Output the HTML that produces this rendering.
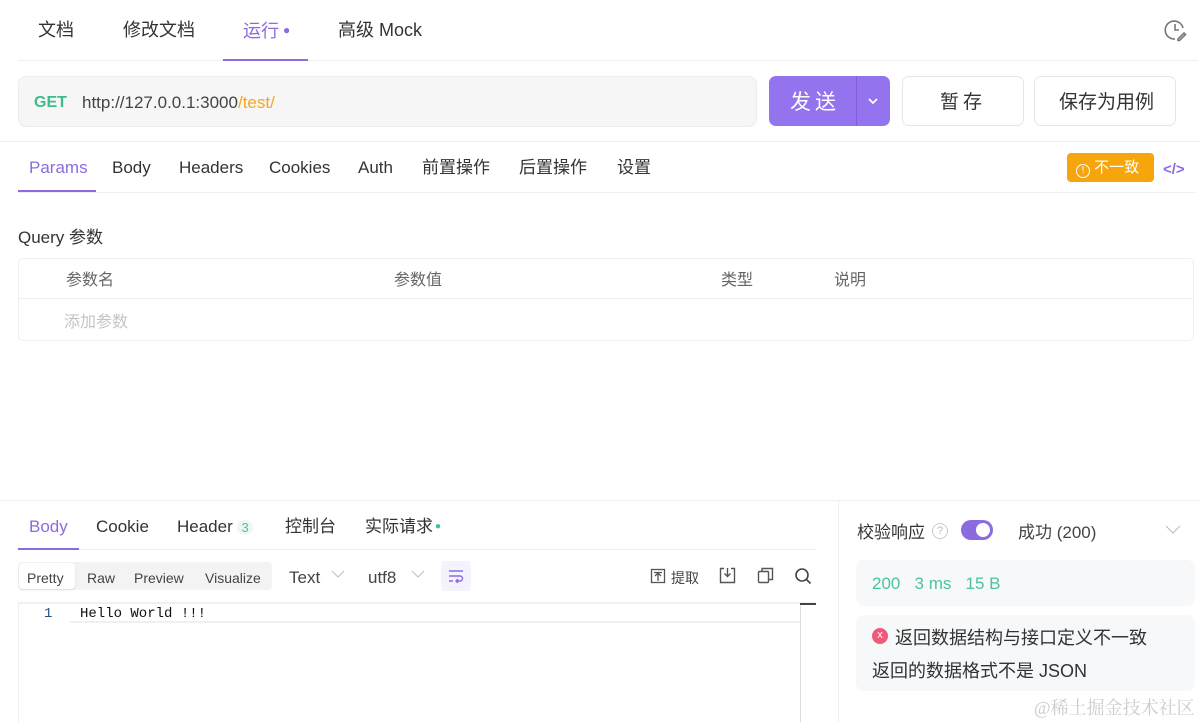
<!DOCTYPE html>
<html><head><meta charset="utf-8">
<style>
*{margin:0;padding:0;box-sizing:border-box}
body{width:1200px;height:722px;position:relative;background:#fff;font-family:"Liberation Sans","Noto Sans CJK SC",sans-serif;color:#333;overflow:hidden}
.a{position:absolute;white-space:nowrap;line-height:24px}
.t{margin-top:2px}
.p{color:#8c6be0}
.line{position:absolute;background:#eee;height:1px}
</style></head><body>
<!-- top tabs -->
<div class="a t" style="left:38px;top:16px;font-size:18px">文档</div>
<div class="a t" style="left:123px;top:16px;font-size:18px">修改文档</div>
<div class="a p t" style="left:243px;top:16px;font-size:18px">运行<span style="font-size:12px;vertical-align:3px;margin-left:4px">●</span></div>
<div class="a t" style="left:338px;top:16px;font-size:18px">高级 Mock</div>
<div class="line" style="left:18px;top:60px;width:1180px"></div>
<div class="a" style="left:223px;top:59px;width:85px;height:2px;background:#8c6be0"></div>
<svg class="a" style="left:1163px;top:18px" width="24" height="24" viewBox="0 0 24 24" fill="none" stroke="#777" stroke-width="1.6"><path d="M20 10A9 9 0 1 0 12 21"/><path d="M12 6v6h4"/><path d="M15 21l6-6 1.5 1.5-6 6H15z"/></svg>
<!-- URL -->
<div class="a" style="left:18px;top:76px;width:739px;height:51px;background:#f6f6f6;border:1px solid #ececec;border-radius:8px"></div>
<div class="a t" style="left:34px;top:89px;font-size:16px;font-weight:bold;color:#3dbd8b">GET</div>
<div class="a t" style="left:82px;top:89px;font-size:17px;color:#444">http://127.0.0.1:3000<span style="color:#f5a623">/test/</span></div>
<div class="a" style="left:769px;top:76px;width:121px;height:50px;background:#9373ee;border-radius:7px"></div>
<div class="a" style="left:856px;top:76px;width:1px;height:50px;background:#835fe0"></div>
<div class="a t" style="left:790px;top:89px;font-size:21px;color:#fff;letter-spacing:4px">发送</div>
<svg class="a" style="left:867px;top:96px" width="12" height="10" viewBox="0 0 12 10"><path d="M2 3l4 4 4-4" stroke="#fff" stroke-width="1.8" fill="none"/></svg>
<div class="a" style="left:902px;top:76px;width:122px;height:50px;border:1px solid #e6e6e6;border-radius:7px"></div>
<div class="a t" style="left:940px;top:89px;font-size:19px;letter-spacing:4px">暂存</div>
<div class="a" style="left:1034px;top:76px;width:142px;height:50px;border:1px solid #e6e6e6;border-radius:7px"></div>
<div class="a t" style="left:1059px;top:89px;font-size:19px">保存为用例</div>
<div class="line" style="left:0;top:141px;width:1200px"></div>
<!-- params tabs -->
<div class="a t" style="left:29px;top:154px;font-size:17px;color:#8c6be0">Params</div>
<div class="a t" style="left:112px;top:154px;font-size:17px">Body</div>
<div class="a t" style="left:179px;top:154px;font-size:17px">Headers</div>
<div class="a t" style="left:269px;top:154px;font-size:17px">Cookies</div>
<div class="a t" style="left:358px;top:154px;font-size:17px">Auth</div>
<div class="a t" style="left:422px;top:154px;font-size:17px">前置操作</div>
<div class="a t" style="left:519px;top:154px;font-size:17px">后置操作</div>
<div class="a t" style="left:617px;top:154px;font-size:17px">设置</div>
<div class="line" style="left:18px;top:192px;width:1177px"></div>
<div class="a" style="left:18px;top:190px;width:78px;height:2px;background:#8c6be0"></div>
<div class="a" style="left:1067px;top:153px;width:87px;height:29px;background:#f7a50c;border-radius:4px;color:#fff;font-size:15px;line-height:29px;padding-left:9px"><span style="display:inline-block;width:14px;height:14px;border:1.5px solid #fff;border-radius:50%;font-size:10px;line-height:11px;text-align:center;vertical-align:-1px">!</span> 不一致</div>
<div class="a t" style="left:1163px;top:156px;font-size:15px;color:#8c6be0;font-weight:bold">&lt;/&gt;</div>
<!-- query -->
<div class="a t" style="left:18px;top:224px;font-size:17px">Query 参数</div>
<div class="a" style="left:18px;top:258px;width:1176px;height:83px;border:1px solid #eee;border-radius:5px"></div>
<div class="line" style="left:18px;top:298px;width:1176px"></div>
<div class="a t" style="left:66px;top:267px;font-size:16px;color:#666">参数名</div>
<div class="a t" style="left:394px;top:267px;font-size:16px;color:#666">参数值</div>
<div class="a t" style="left:721px;top:267px;font-size:16px;color:#666">类型</div>
<div class="a t" style="left:834px;top:267px;font-size:16px;color:#666">说明</div>
<div class="a t" style="left:64px;top:309px;font-size:16px;color:#c4c4c4">添加参数</div>
<!-- bottom -->
<div class="line" style="left:0;top:500px;width:1200px"></div>
<div class="a" style="left:838px;top:500px;width:1px;height:222px;background:#eee"></div>
<div class="a t" style="left:29px;top:513px;font-size:17px;color:#8c6be0">Body</div>
<div class="a t" style="left:96px;top:513px;font-size:17px">Cookie</div>
<div class="a t" style="left:177px;top:513px;font-size:17px">Header <span style="font-size:13px;color:#4cc39a;background:#f3f5f5;border-radius:8px;padding:0 4px">3</span></div>
<div class="a t" style="left:285px;top:513px;font-size:17px">控制台</div>
<div class="a t" style="left:365px;top:513px;font-size:17px">实际请求<span style="color:#3dc48f;font-size:10px;vertical-align:3px;margin-left:2px">●</span></div>
<div class="line" style="left:18px;top:549px;width:798px"></div>
<div class="a" style="left:18px;top:548px;width:61px;height:2px;background:#8c6be0"></div>
<div class="a" style="left:18px;top:562px;width:254px;height:28px;background:#f3f3f3;border-radius:4px"></div>
<div class="a" style="left:19px;top:563px;width:56px;height:26px;background:#fff;border-radius:4px;box-shadow:0 1px 2px rgba(0,0,0,.1)"></div>
<div class="a t" style="left:27px;top:564px;font-size:14px;color:#444">Pretty</div>
<div class="a t" style="left:87px;top:564px;font-size:14px;color:#444">Raw</div>
<div class="a t" style="left:134px;top:564px;font-size:14px;color:#444">Preview</div>
<div class="a t" style="left:205px;top:564px;font-size:14px;color:#444">Visualize</div>
<div class="a t" style="left:289px;top:564px;font-size:17px;color:#444">Text</div>
<svg class="a" style="left:331px;top:569px" width="14" height="10"><path d="M1 2l6 6 6-6" stroke="#bbb" fill="none"/></svg>
<div class="a t" style="left:368px;top:564px;font-size:17px;color:#444">utf8</div>
<svg class="a" style="left:411px;top:569px" width="14" height="10"><path d="M1 2l6 6 6-6" stroke="#bbb" fill="none"/></svg>
<div class="a" style="left:441px;top:561px;width:30px;height:30px;background:#f4f2fc;border-radius:4px"></div>
<svg class="a" style="left:448px;top:568px" width="16" height="16" viewBox="0 0 16 16" fill="none" stroke="#8c6be0" stroke-width="1.4"><path d="M1 3h14M1 8h11a2.5 2.5 0 0 1 0 5H8M10 11l-2 2 2 2M1 13h4"/></svg>
<svg class="a" style="left:650px;top:568px" width="16" height="16" viewBox="0 0 16 16" fill="none" stroke="#555" stroke-width="1.3"><rect x="1.5" y="1.5" width="13" height="13"/><path d="M4 4.5h8M8 5v8M5 8l3-3 3 3"/></svg>
<div class="a t" style="left:671px;top:564px;font-size:14px;color:#444">提取</div>
<svg class="a" style="left:719px;top:567px" width="17" height="17" viewBox="0 0 17 17" fill="none" stroke="#555" stroke-width="1.4"><path d="M5 1.5H1.5v14h14v-14H12M8.5 1v8M5.5 6.5l3 3 3-3"/></svg>
<svg class="a" style="left:757px;top:567px" width="17" height="17" viewBox="0 0 17 17" fill="none" stroke="#555" stroke-width="1.4"><rect x="1.5" y="4.5" width="10" height="11" rx="1"/><path d="M5 4V1.5h10.5v11H12"/></svg>
<svg class="a" style="left:794px;top:567px" width="18" height="18" viewBox="0 0 18 18" fill="none" stroke="#444" stroke-width="1.6"><circle cx="8" cy="8" r="6"/><path d="M12.5 12.5l4 4"/></svg>
<!-- editor -->
<div class="a" style="left:18px;top:602px;width:798px;height:2px;background:#f0f0f0"></div>
<div class="a" style="left:18px;top:604px;width:1px;height:118px;background:#eee"></div>
<div class="a" style="left:70px;top:621px;width:730px;height:2px;background:#f0f0f0"></div>
<div class="a" style="left:800px;top:603px;width:1px;height:119px;background:#ddd"></div>
<div class="a" style="left:800px;top:603px;width:16px;height:2px;background:#444"></div>
<div class="a" style="left:44px;top:602px;font-size:14px;color:#23537d;font-family:'Liberation Mono',monospace">1</div>
<div class="a" style="left:80px;top:602px;font-size:14px;color:#111;font-family:'Liberation Mono',monospace">Hello World !!!</div>
<!-- right panel -->
<div class="a t" style="left:857px;top:519px;font-size:17px">校验响应</div>
<div class="a" style="left:932px;top:523px;width:16px;height:16px;border:1px solid #ccc;border-radius:50%;font-size:11px;line-height:14px;text-align:center;color:#bbb">?</div>
<div class="a" style="left:961px;top:520px;width:32px;height:20px;background:#8c6be0;border-radius:10px"></div>
<div class="a" style="left:976px;top:523px;width:14px;height:14px;background:#fff;border-radius:50%"></div>
<div class="a t" style="left:1018px;top:519px;font-size:17px;color:#444">成功 (200)</div>
<svg class="a" style="left:1165px;top:524px" width="16" height="12"><path d="M1 2l7 7 7-7" stroke="#bbb" fill="none"/></svg>
<div class="a" style="left:856px;top:560px;width:339px;height:46px;background:#f7f8fa;border-radius:8px"></div>
<div class="a t" style="left:872px;top:570px;font-size:17px;color:#4cc39a">200&nbsp;&nbsp; 3 ms&nbsp;&nbsp; 15 B</div>
<div class="a" style="left:856px;top:615px;width:339px;height:76px;background:#f7f8fa;border-radius:8px"></div>
<div class="a" style="left:872px;top:628px;width:16px;height:16px;background:#ef5a7c;border-radius:50%;color:#fff;font-size:11px;line-height:15px;text-align:center">x</div>
<div class="a t" style="left:895px;top:624px;font-size:18px">返回数据结构与接口定义不一致</div>
<div class="a t" style="left:872px;top:657px;font-size:18px">返回的数据格式不是 JSON</div>
<div class="a t" style="left:1034px;top:694px;font-size:18px;color:#ccc;font-family:'Liberation Serif','Noto Serif CJK SC',serif">@稀土掘金技术社区</div>
</body></html>
